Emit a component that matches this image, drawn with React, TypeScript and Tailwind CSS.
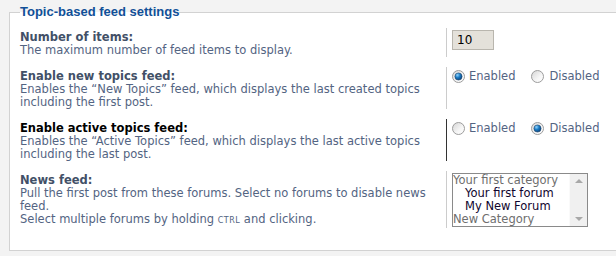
import type { ReactNode } from 'react';

function Radio({ checked }: { checked?: boolean }) {
  return (
    <svg width="13" height="13" viewBox="0 0 13 13" className="shrink-0">
      <defs>
        <linearGradient id="rfill" x1="0" y1="0" x2="1" y2="1">
          <stop offset="0" stopColor="#d4d4d4" />
          <stop offset="0.6" stopColor="#f6f6f6" />
          <stop offset="1" stopColor="#ffffff" />
        </linearGradient>
        <radialGradient id="rdot" cx="0.35" cy="0.3" r="0.8">
          <stop offset="0" stopColor="#8fd4ff" />
          <stop offset="0.45" stopColor="#1a7bc4" />
          <stop offset="1" stopColor="#0a3a6e" />
        </radialGradient>
      </defs>
      <circle cx="6.5" cy="6.5" r="6" fill="url(#rfill)" stroke="#9c9c9c" strokeWidth="1" />
      {checked && <circle cx="6.5" cy="6.5" r="3.6" fill="url(#rdot)" stroke="#23486e" strokeWidth="0.6" />}
    </svg>
  );
}

function Row({
  label,
  lines,
  hover,
  children,
  ddClass = 'pt-[2px]',
}: {
  label: string;
  lines: ReactNode[];
  hover?: boolean;
  children: ReactNode;
  ddClass?: string;
}) {
  return (
    <div className="flex">
      <div className="w-[426px] shrink-0 pt-[3px] whitespace-nowrap">
        <div className={`font-bold ${hover ? 'text-black' : 'text-[#425067]'}`}>{label}</div>
        {lines.map((l, i) => (
          <div key={i} className="text-[#536482]">
            {l}
          </div>
        ))}
      </div>
      <div className={`flex-1 border-l pl-[5px] ${hover ? 'border-[#333333]' : 'border-[#cccccc]'} ${ddClass}`}>
        {children}
      </div>
    </div>
  );
}

function RadioPair({ enabled }: { enabled: boolean }) {
  return (
    <div className="flex items-center text-[#536482]">
      <Radio checked={enabled} />
      <span className="ml-[4px]">Enabled</span>
      <span className="ml-[16px]">
        <Radio checked={!enabled} />
      </span>
      <span className="ml-[5px]">Disabled</span>
    </div>
  );
}

function ForumSelect() {
  const items = [
    { text: 'Your first category', cat: true },
    { text: 'Your first forum', cat: false },
    { text: 'My New Forum', cat: false },
    { text: 'New Category', cat: true },
  ];
  return (
    <div className="flex w-[136px] h-[54px] border border-[#8a8a8a] bg-white overflow-hidden">
      <div className="flex-1 text-[11.5px] leading-[13px]">
        {items.map((it) => (
          <div
            key={it.text}
            className={it.cat ? 'text-[#6e6e6e] whitespace-nowrap' : 'text-[#10052e] pl-[12px] whitespace-nowrap'}
          >
            {it.text}
          </div>
        ))}
      </div>
      <div className="w-[18px] bg-[#f0f0f0] border-l border-[#fafafa] flex flex-col items-center justify-between py-[5px]">
        <div className="w-0 h-0 border-l-[4px] border-r-[4px] border-b-[4px] border-l-transparent border-r-transparent border-b-[#a8a8a8]" />
        <div className="w-0 h-0 border-l-[4px] border-r-[4px] border-t-[4px] border-l-transparent border-r-transparent border-t-[#a8a8a8]" />
      </div>
    </div>
  );
}

export default function App() {
  return (
    <div
      className="w-[616px] h-[256px] overflow-hidden bg-[#f3f3f3] pt-[4px] pl-[9px] text-[11.5px] leading-[13px]"
      style={{ fontFamily: '"DejaVu Sans", Verdana, sans-serif' }}
    >
      <fieldset className="w-[660px] border border-[#d2d2d2] bg-white px-[10px] pb-[22px]">
        <legend
          className="p-0 text-[13px] leading-[16px] font-bold text-[#115098]"
          style={{ fontFamily: '"Liberation Sans", Arial, sans-serif' }}
        >
          Topic-based feed settings
        </legend>

        <div className="flex flex-col gap-[10px] pt-[8px]">
          <Row label="Number of items:" lines={['The maximum number of feed items to display.']}>
            <div className="w-[42px] h-[20px] border border-[#b9b6ae] bg-[#e4e1da] pl-[4px] text-[12px] leading-[18px] text-black">
              10
            </div>
          </Row>

          <Row
            label="Enable new topics feed:"
            lines={[
              'Enables the \u201cNew Topics\u201d feed, which displays the last created topics',
              'including the first post.',
            ]}
            ddClass="pt-[3px]"
          >
            <RadioPair enabled />
          </Row>

          <Row
            label="Enable active topics feed:"
            hover
            lines={[
              'Enables the \u201cActive Topics\u201d feed, which displays the last active topics',
              'including the last post.',
            ]}
            ddClass="pt-[3px]"
          >
            <RadioPair enabled={false} />
          </Row>

          <Row
            label="News feed:"
            lines={[
              'Pull the first post from these forums. Select no forums to disable news',
              'feed.',
              <>
                Select multiple forums by holding <span className="text-[8px] tracking-[0.5px]">CTRL</span> and clicking.
              </>,
            ]}
            ddClass="pt-[2px] pb-[1px]"
          >
            <ForumSelect />
          </Row>
        </div>
      </fieldset>
    </div>
  );
}
